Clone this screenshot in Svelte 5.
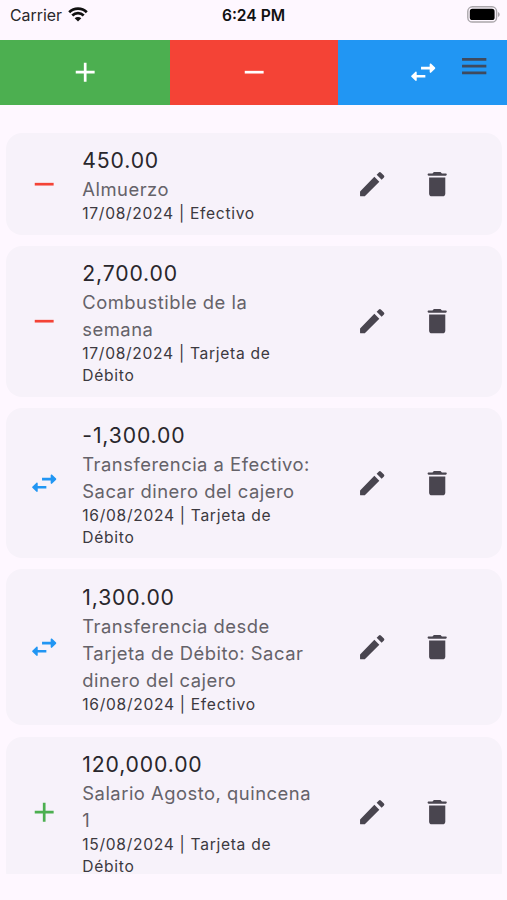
<script lang="ts">
  type Kind = 'expense' | 'income' | 'transfer'

  interface Movement {
    kind: Kind
    amount: string
    description: string
    date: string
    account: string
  }

  const icons: Record<Kind, string> = {
    income: 'M19 13h-6v6h-2v-6H5v-2h6V5h2v6h6v2z',
    expense: 'M19 13H5v-2h14v2z',
    transfer:
      'M10.4 8H16.8V6.1c0-.5.5-.8.9-.5l3.1 3c.2.2.2.6 0 .8l-3.1 3c-.4.3-.9 0-.9-.5V10h-6.4zM13.6 16H7.2v1.9c0 .5-.5.8-.9.5l-3.1-3c-.2-.2-.2-.6 0-.8l3.1-3c.4-.3.9 0 .9.5V14h6.4z',
  }

  const pencil =
    'M3 17.7V20.5c0 .3.2.5.5.5h2.8c.2 0 .3 0 .4-.2L17.3 10.2l-3.7-3.7L3.2 17.2c-.1.1-.2.3-.2.5zM20.7 7a1 1 0 0 0 0-1.4l-2.3-2.3a1 1 0 0 0-1.4 0l-1.7 1.7 3.7 3.7L20.7 7z'
  const trash =
    'M6 19c0 1.1.9 2 2 2h8c1.1 0 2-.9 2-2V7H6v12zM18.3 4H15.5l-.7-.7c-.2-.2-.4-.3-.7-.3H9.9c-.3 0-.5.1-.7.3L8.5 4H5.7c-.5 0-.8.4-.8.9s.3.9.8.9h12.6c.5 0 .8-.4.8-.9S18.8 4 18.3 4z'

  const tabs: { kind: Kind; label: string }[] = [
    { kind: 'income', label: 'Ingreso' },
    { kind: 'expense', label: 'Gasto' },
    { kind: 'transfer', label: 'Transferencia' },
  ]

  const movements: Movement[] = [
    { kind: 'expense', amount: '450.00', description: 'Almuerzo', date: '17/08/2024', account: 'Efectivo' },
    { kind: 'expense', amount: '2,700.00', description: 'Combustible de la semana', date: '17/08/2024', account: 'Tarjeta de Débito' },
    { kind: 'transfer', amount: '-1,300.00', description: 'Transferencia a Efectivo: Sacar dinero del cajero', date: '16/08/2024', account: 'Tarjeta de Débito' },
    { kind: 'transfer', amount: '1,300.00', description: 'Transferencia desde Tarjeta de Débito: Sacar dinero del cajero', date: '16/08/2024', account: 'Efectivo' },
    { kind: 'income', amount: '120,000.00', description: 'Salario Agosto, quincena 1', date: '15/08/2024', account: 'Tarjeta de Débito' },
  ]
</script>

<div class="screen">
  <header class="status">
    <div class="status__carrier">
      <span>Carrier</span>
      <svg class="status__wifi" viewBox="0 0 20 15" aria-hidden="true">
        <path d="M1.2 5.2a12.6 12.6 0 0 1 17.6 0M4.3 8.5a8.1 8.1 0 0 1 11.4 0" fill="none" stroke="#111" stroke-width="2.7" />
        <path d="M10 14.6l-3.3-3.3a4.7 4.7 0 0 1 6.6 0z" fill="#111" />
      </svg>
    </div>
    <span class="status__time">6:24 PM</span>
    <svg class="status__battery" viewBox="0 0 33 17" aria-hidden="true">
      <rect x="0.8" y="0.8" width="28.8" height="15.2" rx="4.6" fill="none" stroke="#aaa6ab" stroke-width="1.4" />
      <rect x="2.8" y="2.8" width="24.8" height="11.2" rx="2.6" fill="#000" />
      <path d="M31 6v5c1-.4 1.7-1.4 1.7-2.5S32 6.4 31 6z" fill="#aaa6ab" />
    </svg>
  </header>

  <nav class="tabs">
    {#each tabs as tab}
      <button type="button" class="tab tab--{tab.kind}" aria-label={tab.label}>
        <svg class="icon" viewBox="0 0 24 24"><path d={icons[tab.kind]} /></svg>
      </button>
    {/each}
    <button type="button" class="menu" aria-label="Menú">
      <svg class="icon" viewBox="0 0 24 24"><path d="M3 18h18v-2H3v2zm0-5h18v-2H3v2zm0-7v2h18V6H3z" /></svg>
    </button>
  </nav>

  <main class="list">
    {#each movements as item}
      <article class="card">
        <svg class="icon card__icon icon--{item.kind}" viewBox="0 0 24 24"><path d={icons[item.kind]} /></svg>
        <div class="card__text">
          <p class="card__amount">{item.amount}</p>
          <p class="card__description">{item.description}</p>
          <p class="card__meta">{item.date} | {item.account}</p>
        </div>
        <div class="card__actions">
          <button type="button" class="action" aria-label="Editar">
            <svg class="icon" viewBox="0 0 24 24"><path d={pencil} /></svg>
          </button>
          <button type="button" class="action" aria-label="Eliminar">
            <svg class="icon" viewBox="0 0 24 24"><path d={trash} /></svg>
          </button>
        </div>
      </article>
    {/each}
  </main>
</div>

<style>
  :global(body) {
    background: #fef7ff;
  }

  .screen {
    display: flex;
    flex-direction: column;
    height: 900px;
    box-sizing: border-box;
    padding-bottom: 26px;
    overflow: hidden;
    background: #fef7ff;
    color: #29272c;
    font-family: Inter, 'Liberation Sans', sans-serif;
  }

  button {
    display: flex;
    align-items: center;
    justify-content: center;
    padding: 0;
    border: 0;
    background: none;
    color: inherit;
    cursor: pointer;
  }

  .icon {
    display: block;
    flex: none;
    width: 32.4px;
    height: 32.4px;
    fill: currentColor;
  }

  .icon--expense {
    color: #f44336;
  }

  .icon--income {
    color: #4caf50;
  }

  .icon--transfer {
    color: #2196f3;
  }

  .status {
    display: grid;
    grid-template-columns: 1fr auto 1fr;
    align-items: center;
    flex: none;
    height: 40px;
    box-sizing: border-box;
    padding: 0 7px 10px 10px;
  }

  .status__carrier {
    display: flex;
    align-items: center;
    gap: 6px;
    font-size: 15.9px;
    color: #2a282c;
  }

  .status__wifi {
    width: 20px;
    height: 15px;
    margin-top: -1px;
  }

  .status__time {
    margin-left: -3px;
    font-size: 15.6px;
    font-weight: 600;
    color: #111;
  }

  .status__battery {
    justify-self: end;
    width: 33px;
    height: 17px;
    margin-top: -1px;
  }

  .tabs {
    position: relative;
    display: grid;
    grid-template-columns: 169.5px 168.5px 1fr;
    flex: none;
    height: 65px;
  }

  .tab {
    padding-left: 1px;
    color: #fff;
  }

  .tab--income {
    background: #4caf50;
  }

  .tab--expense {
    background: #f44336;
  }

  .tab--transfer {
    background: #2196f3;
  }

  /* floats over the last tab */
  .menu {
    position: absolute;
    top: 9.6px;
    right: 16.5px;
    color: #3f4a5e;
  }

  .list {
    display: flex;
    flex-direction: column;
    flex: 1;
    min-height: 0;
    gap: 11.1px;
    padding: 27.6px 5.5px 0 6px;
    overflow: hidden;
  }

  .card {
    display: flex;
    align-items: center;
    flex: none;
    box-sizing: border-box;
    padding: 12.6px 31.7px 10.1px 21.5px;
    border-radius: 16px;
    background: #f7f2fa;
  }

  .card__icon {
    margin-top: -2px;
  }

  .card__text {
    flex: 1;
    margin: 0 21.6px 0 22.4px;
  }

  .card__text p {
    margin: 0;
  }

  .card__amount {
    font-size: 21.2px;
    line-height: 31px;
    letter-spacing: 0.85px;
  }

  .card__description {
    font-size: 18.4px;
    line-height: 26.9px;
    letter-spacing: 0.5px;
    color: #656269;
  }

  .card__meta {
    font-size: 15.6px;
    line-height: 21.6px;
    letter-spacing: 0.7px;
    color: #3c393f;
  }

  .card__actions {
    display: flex;
    margin-top: -2px;
    color: #49454f;
  }

  .action {
    width: 65px;
    height: 65px;
  }
</style>
